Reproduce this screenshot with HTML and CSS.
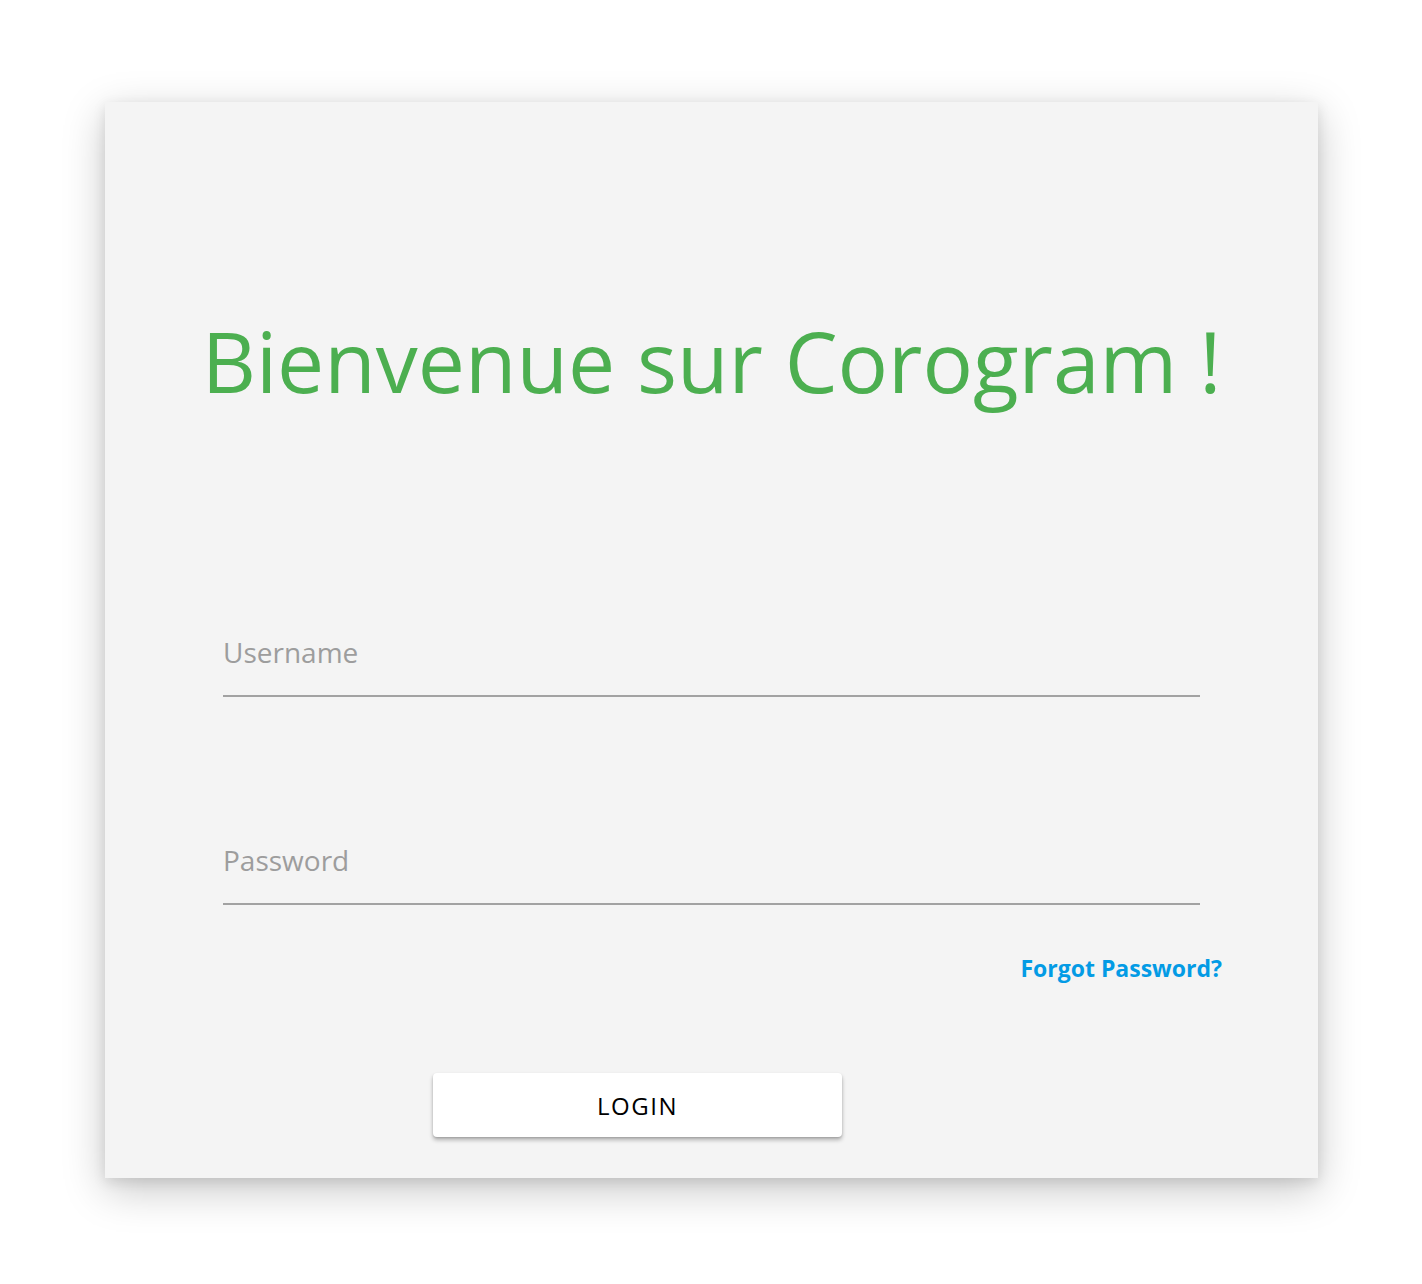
FILE: index.html
```html
<!DOCTYPE html>
<html lang="fr">
<head>
<meta charset="utf-8">
<title>Corogram - Login</title>
<link rel="stylesheet" href="styles.css">
</head>
<body>
<main class="card">
  <h1 class="title">Bienvenue sur Corogram !</h1>
  <form class="form">
    <input class="field" type="text" placeholder="Username">
    <input class="field field-password" type="password" placeholder="Password">
    <div class="forgot-row"><a class="forgot" href="#">Forgot Password?</a></div>
    <button class="login" type="button">LOGIN</button>
  </form>
</main>
</body>
</html>
```

FILE: styles.css
```css
html, body {
  margin: 0;
  padding: 0;
  background: #ffffff;
}
body {
  padding: 102px 0 106px 105px;
  font-family: "Open Sans", "Noto Sans", sans-serif;
}
.card {
  box-sizing: border-box;
  width: 1213px;
  height: 1076px;
  background: #f4f4f4;
  box-shadow: 0 12px 40px rgba(0, 0, 0, 0.22), 0 4px 12px rgba(0, 0, 0, 0.10);
  padding-top: 209px;
  display: flex;
  flex-direction: column;
}
.title {
  margin: 0;
  text-align: center;
  font-weight: 400;
  font-size: 84px;
  line-height: 100px;
  color: #4caf50;
}
.form {
  margin: 221px 96px 0 118px;
  display: flex;
  flex-direction: column;
}
.field {
  box-sizing: content-box;
  width: 977px;
  height: 40px;
  padding: 0 0 23px 0;
  margin: 0;
  border: none;
  border-bottom: 2px solid #a2a2a2;
  background: transparent;
  font-family: "Open Sans", "Noto Sans", sans-serif;
  font-size: 28px;
  color: #333;
  outline: none;
}
.field::placeholder {
  color: #9d9d9d;
}
.field-password {
  margin-top: 143px;
}
.forgot-row {
  display: flex;
  justify-content: flex-end;
  margin-top: 48px;
  height: 30px;
}
.forgot {
  font-size: 23px;
  line-height: 30px;
  font-weight: 700;
  color: #039be5;
  text-decoration: none;
}
.login {
  margin: 90px 0 0 210px;
  width: 409px;
  height: 64px;
  background: #ffffff;
  border: none;
  border-radius: 4px;
  box-shadow: 0 3px 4px rgba(0, 0, 0, 0.28), 0 1px 2px rgba(0, 0, 0, 0.12);
  font-family: "Open Sans", "Noto Sans", sans-serif;
  font-size: 24px;
  letter-spacing: 1.5px;
  color: #000;
  padding: 0;
  cursor: pointer;
}
```
